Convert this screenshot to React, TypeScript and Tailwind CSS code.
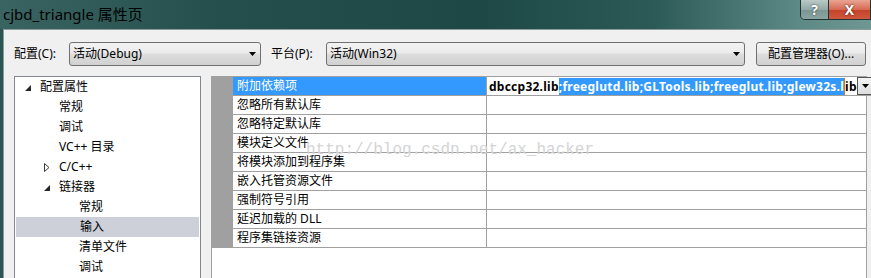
import type { ReactNode } from "react";

const ui = "font-['Noto_Sans','Noto_Sans_CJK_SC',sans-serif]";

function Expanded() {
  return (
    <svg width="6" height="6" viewBox="0 0 6 6" className="block">
      <polygon points="6,0 6,6 0,6" fill="#262626" />
    </svg>
  );
}

function Collapsed() {
  return (
    <svg width="6" height="9" viewBox="0 0 6 9" className="block">
      <polygon points="0.5,0.5 5,4.5 0.5,8.5" fill="#fff" stroke="#3a3a3a" strokeWidth="1" />
    </svg>
  );
}

function DownArrow() {
  return (
    <svg width="7" height="4" viewBox="0 0 7 4" className="block">
      <polygon points="0,0 7,0 3.5,4" fill="#000" />
    </svg>
  );
}

function Combo({ text, width }: { text: string; width: string }) {
  return (
    <div
      className={`${width} h-[24px] flex items-center justify-between rounded-[3px] border border-[#707070] bg-[linear-gradient(#f3f3f3,#ebebeb_45%,#dddddd_50%,#d1d1d1)] pl-[3px] pr-[4px]`}
    >
      <span className="text-[12px] text-black">{text}</span>
      <DownArrow />
    </div>
  );
}

type TreeItem = { label: string; level: number; arrow?: "open" | "closed"; selected?: boolean };

const tree: TreeItem[] = [
  { label: "配置属性", level: 0, arrow: "open" },
  { label: "常规", level: 1 },
  { label: "调试", level: 1 },
  { label: "VC++ 目录", level: 1 },
  { label: "C/C++", level: 1, arrow: "closed" },
  { label: "链接器", level: 1, arrow: "open" },
  { label: "常规", level: 2 },
  { label: "输入", level: 2, selected: true },
  { label: "清单文件", level: 2 },
  { label: "调试", level: 2 },
];

const textIndent = ["pl-[25px]", "pl-[44px]", "pl-[64px]"];
const arrowIndent = ["left-[10px]", "left-[29px]", "left-[48px]"];

const props = [
  "附加依赖项",
  "忽略所有默认库",
  "忽略特定默认库",
  "模块定义文件",
  "将模块添加到程序集",
  "嵌入托管资源文件",
  "强制符号引用",
  "延迟加载的 DLL",
  "程序集链接资源",
];

function Row({ first, name, children }: { first?: boolean; name: string; children?: ReactNode }) {
  return (
    <div className="flex h-[19px]">
      <div className="w-[21px] shrink-0 bg-[#a0a0a0]" />
      <div
        className={`w-[254px] shrink-0 border-r border-b border-[#a0a0a0] pl-[4px] text-[12px] leading-[18px] whitespace-nowrap ${
          first ? "bg-[#3399ff] text-white" : "bg-white text-black"
        }`}
      >
        {name}
      </div>
      <div className="flex-1 border-b border-[#a0a0a0] bg-white">{children}</div>
    </div>
  );
}

export default function App() {
  return (
    <div className={`${ui} w-[871px] h-[278px] overflow-hidden flex flex-col bg-[#2a5552] relative`}>
      {/* title bar */}
      <div className="h-[29px] shrink-0 flex justify-between bg-[linear-gradient(90deg,#3a6461_0%,#244f4c_25%,#1d4845_55%,#2c5a57_75%,#5d8a86_92%,#6f9793_100%)]">
        <div className="pl-[3px] pt-[4px] text-[15px] leading-[20px] text-black">cjbd_triangle 属性页</div>
        <div className="flex h-[20px] rounded-bl-[5px] border border-t-0 border-[#203434] overflow-hidden">
          <div className="w-[27px] flex items-center justify-center bg-[linear-gradient(#b9c9c7,#93aaa8_50%,#7a9592_52%,#8aa5a2)] text-[14px] font-bold text-white leading-none [text-shadow:0_0_2px_#1a2a2a]">
            ?
          </div>
          <div className="w-[42px] flex items-center justify-center border-l border-[#203434] bg-[linear-gradient(#e9a493,#d66a52_50%,#c3422a_52%,#d0583d)] text-[14px] font-bold text-white leading-none [text-shadow:0_0_2px_#3a0a00]">
            X
          </div>
        </div>
      </div>

      {/* body */}
      <div className="flex-1 ml-[3px] border-l border-t border-[#8c9c9b] bg-[#f0f0f0] pl-[10px] pt-[12px]">
        <div className="flex items-center h-[24px] text-[12px] text-black">
          <div className="w-[55px]">配置(C):</div>
          <Combo text="活动(Debug)" width="w-[192px]" />
          <div className="w-[55px] ml-[10px]">平台(P):</div>
          <Combo text="活动(Win32)" width="w-[419px]" />
          <div className="ml-[11px] w-[110px] h-[24px] flex items-center justify-center rounded-[3px] border border-[#707070] bg-[linear-gradient(#f3f3f3,#ebebeb_45%,#dddddd_50%,#d1d1d1)]">
            配置管理器(O)...
          </div>
        </div>

        <div className="flex mt-[10px]">
          {/* tree */}
          <div className="w-[187px] h-[210px] shrink-0 border border-[#828790] bg-white">
            {tree.map((t, i) => (
              <div
                key={i}
                className={`relative h-[20px] text-[12px] leading-[20px] text-black ${textIndent[t.level]} ${
                  t.selected ? "bg-[#cdcfd9] mx-[1px] pl-[63px]" : ""
                }`}
              >
                {t.arrow && (
                  <span className={`absolute top-[8px] ${arrowIndent[t.level]}`}>
                    {t.arrow === "open" ? <Expanded /> : <span className="block -mt-[2px]"><Collapsed /></span>}
                  </span>
                )}
                {t.label}
              </div>
            ))}
          </div>

          {/* property grid */}
          <div className="relative ml-[10px] w-[656px] h-[210px] shrink-0 border-l border-r border-t border-[#a0a0a0] bg-white">
            {props.map((p, i) =>
              i === 0 ? (
                <Row key={i} first name={p}>
                  <div className="flex h-[18px]">
                    <div className="flex-1 overflow-hidden whitespace-nowrap pl-[2px] pt-[1px] text-[12px] font-bold leading-[17px] tracking-[0.25px]">
                      <span className="text-black">dbccp32.lib</span>
                      <span className="bg-[#3399ff] text-white">;freeglutd.lib;GLTools.lib;freeglut.lib;glew32s.l</span>
                      <span className="inline-block w-[1px] h-[17px] align-top bg-[#e07020]" />
                      <span className="text-black">ib</span>
                    </div>
                    <div className="w-[17px] shrink-0 flex items-center justify-center border border-[#555] bg-[linear-gradient(#f4f4f4,#dcdcdc)]">
                      <DownArrow />
                    </div>
                  </div>
                </Row>
              ) : (
                <Row key={i} name={p} />
              )
            )}
            <div className="absolute left-[94px] top-[65px] font-['Liberation_Mono',monospace] text-[16px] leading-none text-[#d4d4d4] whitespace-nowrap pointer-events-none">
              http://blog.csdn.net/ax_hacker
            </div>
          </div>
        </div>
      </div>
    </div>
  );
}
